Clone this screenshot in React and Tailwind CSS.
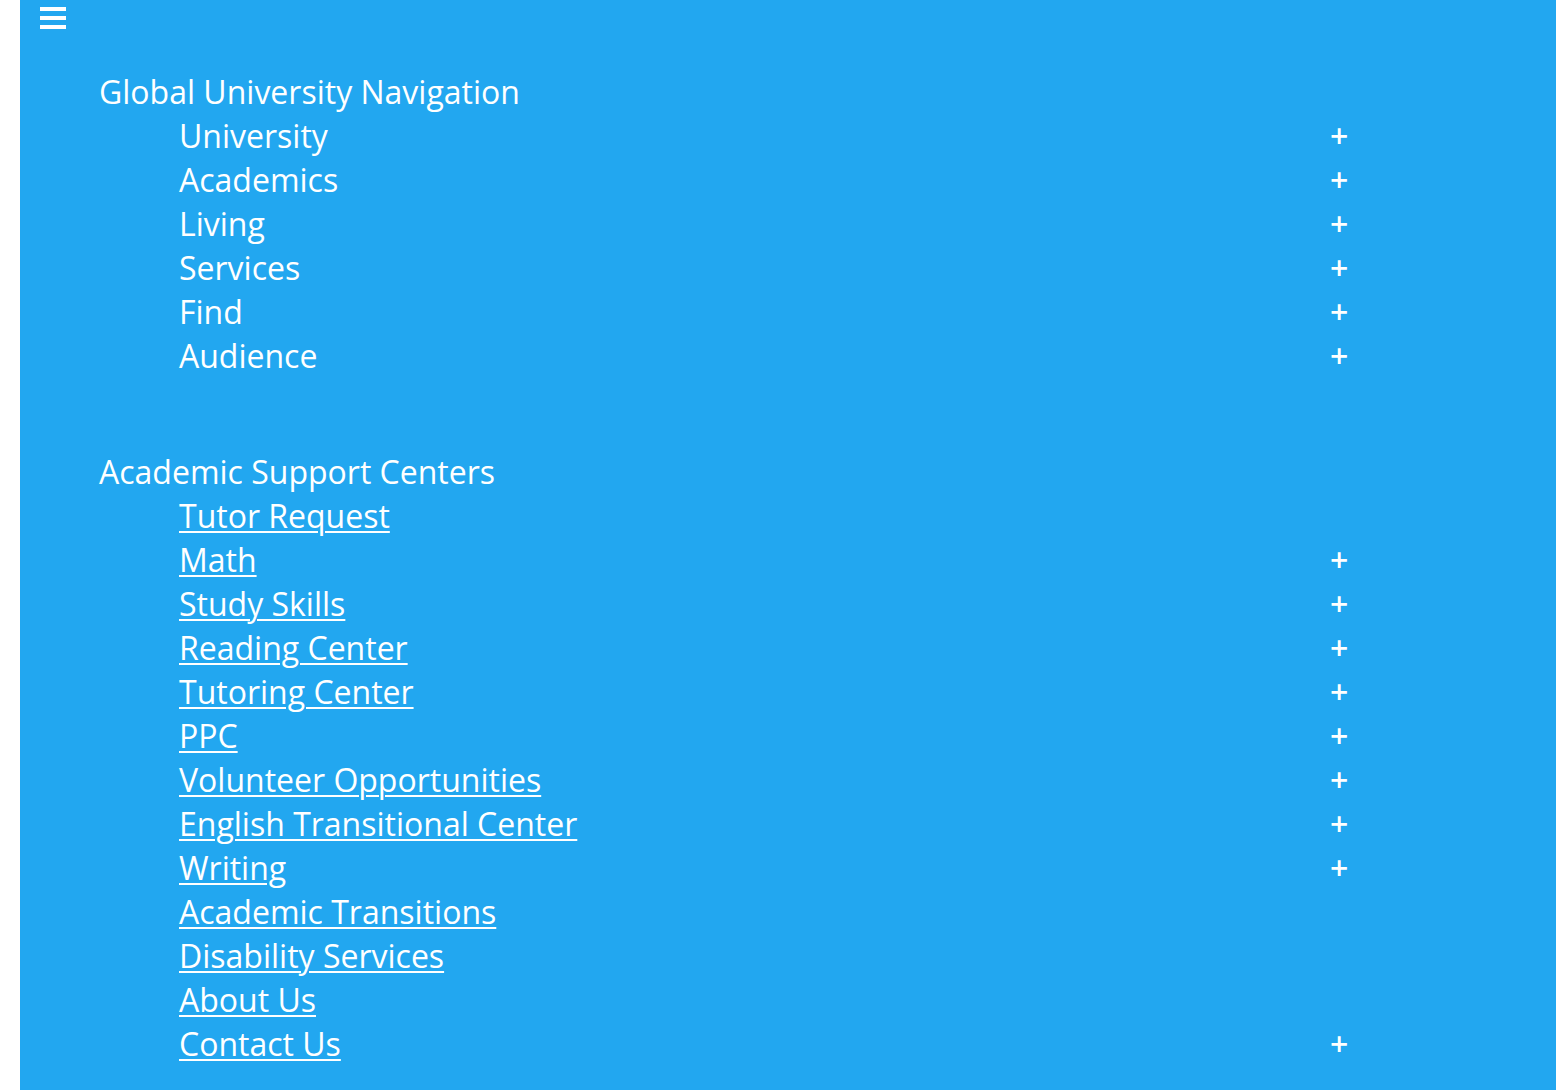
import React from "react";

const global = ["University", "Academics", "Living", "Services", "Find", "Audience"];
const support = [
  ["Tutor Request", false],
  ["Math", true],
  ["Study Skills", true],
  ["Reading Center", true],
  ["Tutoring Center", true],
  ["PPC", true],
  ["Volunteer Opportunities", true],
  ["English Transitional Center", true],
  ["Writing", true],
  ["Academic Transitions", false],
  ["Disability Services", false],
  ["About Us", false],
  ["Contact Us", true],
];

function Row({ label, plus, link }) {
  return (
    <div className="flex items-center h-[44px] w-[1169px]">
      <span className={link ? "underline underline-offset-[3px] decoration-2" : ""}>{label}</span>
      <span className="ml-auto w-[18px] text-center font-semibold">{plus ? "+" : ""}</span>
    </div>
  );
}

export default function App() {
  return (
    <div className="bg-white min-h-[1090px] pl-[20px] pr-[10px]" style={{ fontFamily: '"Open Sans", sans-serif' }}>
      <div className="bg-[#22a7f0] text-white text-[32px] font-medium h-[1090px] overflow-hidden">
        <div className="h-[70px] pl-[20px] pt-[7px]">
          <div className="flex flex-col gap-[5px] w-[26px]">
            <div className="h-[4px] bg-white" />
            <div className="h-[4px] bg-white" />
            <div className="h-[4px] bg-white" />
          </div>
        </div>
        <div className="pl-[79px]">
          <div className="h-[44px] flex items-center">Global University Navigation</div>
          <div className="pl-[80px]">
            {global.map((g) => (
              <Row key={g} label={g} plus />
            ))}
          </div>
          <div className="h-[72px]" />
          <div className="h-[44px] flex items-center">Academic Support Centers</div>
          <div className="pl-[80px]">
            {support.map(([l, p]) => (
              <Row key={l} label={l} plus={p} link />
            ))}
          </div>
        </div>
      </div>
    </div>
  );
}
